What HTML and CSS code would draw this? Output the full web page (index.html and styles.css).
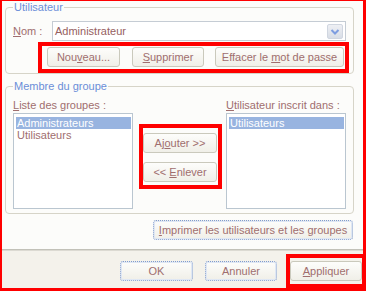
FILE: index.html
```html
<!DOCTYPE html>
<html>

<head>
    <meta charset="utf-8">
    <title>Utilisateurs</title>
    <link rel="stylesheet" href="styles.css">
</head>

<body>
<div class="window">
    <div class="panel">
        <fieldset class="group user-group">
            <legend>Utilisateur</legend>
            <div class="name-row">
                <span class="name-label"><u>N</u>om :</span>
                <div class="combo">
                    <span>Administrateur</span>
                    <span class="combo-btn">
                        <svg width="14" height="13" viewBox="0 0 14 13">
                            <polyline points="3.5,5 7,8.5 10.5,5" fill="none" stroke="#7d9de0" stroke-width="2"/>
                        </svg>
                    </span>
                </div>
            </div>
            <div class="mark user-actions">
                <button class="btn btn-new">Nou<u>v</u>eau...</button>
                <button class="btn btn-del"><u>S</u>upprimer</button>
                <button class="btn btn-pass">Effacer le <u>m</u>ot de passe</button>
            </div>
        </fieldset>

        <fieldset class="group member-group">
            <legend>Membre du groupe</legend>
            <div class="member-cols">
                <div class="col">
                    <div class="col-label"><u>L</u>iste des groupes :</div>
                    <div class="listbox">
                        <div class="item selected">Administrateurs</div>
                        <div class="item">Utilisateurs</div>
                    </div>
                </div>
                <div class="mark move-actions">
                    <button class="btn btn-move">Aj<u>o</u>uter &gt;&gt;</button>
                    <button class="btn btn-move">&lt;&lt; <u>E</u>nlever</button>
                </div>
                <div class="col col-right">
                    <div class="col-label"><u>U</u>tilisateur inscrit dans :</div>
                    <div class="listbox">
                        <div class="item selected">Utilisateurs</div>
                    </div>
                </div>
            </div>
        </fieldset>

        <div class="print-row">
            <button class="btn focus btn-print"><u>I</u>mprimer les utilisateurs et les groupes</button>
        </div>
    </div>

    <div class="footer">
        <button class="btn focus btn-ok">OK</button>
        <button class="btn focus btn-cancel">Annuler</button>
        <div class="mark apply-mark">
            <button class="btn btn-apply"><u>A</u>ppliquer</button>
        </div>
    </div>
</div>
</body>

</html>
```

FILE: styles.css
```css
* {
    box-sizing: border-box;
    margin: 0px;
    padding: 0px;
}
body {
    background: #fff;
    font-family: "Liberation Sans", Arial, sans-serif;
    font-size: 11px;
    color: #a06e6e;
}
u {
    text-decoration: underline;
}
.window {
    width: 366px;
    height: 291px;
    border: solid red;
    border-width: 1px 3px 3px 2px;
    display: flex;
    flex-direction: column;
}
.panel {
    height: 250px;
    background: #fcfcfa;
    padding-left: 3px;
}
.group {
    width: 349px;
    min-width: 0;
    padding: 0 0 0 7px;
    border: 1px solid #d6d4c8;
    border-radius: 4px;
}
.group legend {
    padding: 0 1px;
    line-height: 13px;
    color: #6b8ed8;
}
.name-row {
    display: flex;
    align-items: center;
    height: 20px;
    margin-top: 7px;
}
.name-label {
    width: 39px;
}
.combo {
    width: 294px;
    height: 20px;
    border: 1px solid #c5ccd4;
    background: #fff;
    padding: 0 2px;
    display: flex;
    align-items: center;
    justify-content: space-between;
    color: #966060;
}
.combo-btn {
    width: 16px;
    height: 15px;
    border: 1px solid #d0d6e0;
    border-radius: 2px;
    background: linear-gradient(#eef0f4, #d8dde6);
    display: flex;
    align-items: center;
    justify-content: center;
}
.mark {
    border: 4px solid red;
}
.user-actions {
    display: flex;
    width: 311px;
    height: 31px;
    margin: 1px 0 0 25px;
    padding: 1px 0 0 5px;
}
.btn {
    height: 20px;
    border: 1px solid #cac9bc;
    border-radius: 3px;
    background: linear-gradient(#fdfdfb, #f0efe8);
    font-family: inherit;
    font-size: 11px;
    color: #a06e6e;
}
.focus {
    border: 1px dotted #7f9bd0;
    box-shadow: inset 0 0 0 1px #dfe7f4;
}
.btn-new {
    width: 73px;
    margin-right: 12px;
}
.btn-del {
    width: 72px;
    margin-right: 11px;
}
.btn-pass {
    width: 129px;
}
.member-group {
    margin-top: 6px;
    padding-bottom: 4px;
}
.member-cols {
    display: flex;
    margin-top: 6px;
}
.col {
    width: 120px;
}
.col-right {
    margin-left: 4px;
}
.col-label {
    line-height: 13px;
    white-space: nowrap;
}
.listbox {
    height: 96px;
    margin-top: 1px;
    border: 1px solid #bac6d0;
    background: #fff;
    padding: 3px 1px 0 2px;
}
.item {
    height: 12px;
    line-height: 12px;
    padding-left: 1px;
    color: #a06e6e;
}
.item.selected {
    background: #98b4e0;
    color: #fff;
}
.move-actions {
    width: 83px;
    height: 65px;
    margin: 25px 0 0 6px;
    padding-top: 5px;
    display: flex;
    flex-direction: column;
    gap: 9px;
}
.btn-move {
    width: 74px;
}
.print-row {
    display: flex;
    justify-content: flex-end;
    margin-top: 6px;
    padding-right: 10px;
}
.btn-print {
    width: 200px;
}
.footer {
    flex: 1;
    display: flex;
    justify-content: flex-end;
    align-items: flex-start;
    background: #f4f2eb;
    border-top: 1px solid #c2c1b8;
    box-shadow: inset 0 1px 0 #dcdad2;
}
.btn-ok {
    width: 73px;
    margin: 11px 12px 0 0;
}
.btn-cancel {
    width: 72px;
    margin: 11px 9px 0 0;
}
.apply-mark {
    margin: 4px -3px 0 0;
    padding: 3px 0;
}
.btn-apply {
    display: block;
    width: 72px;
}
```
